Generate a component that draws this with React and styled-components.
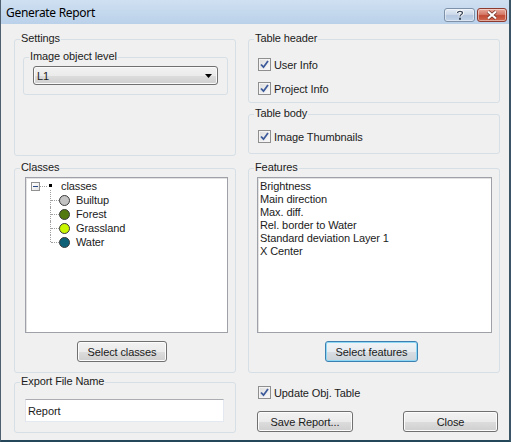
import React from 'react';
import styled, { createGlobalStyle } from 'styled-components';

const GlobalStyle = createGlobalStyle`
  html, body {
    margin: 0;
    padding: 0;
    background: #f0f0f0;
  }
  body {
    font-family: 'Liberation Sans', Arial, sans-serif;
    font-size: 11px;
    letter-spacing: -0.1px;
    color: #1b1b1b;
  }
  * {
    box-sizing: border-box;
  }
`;

const features = [
  'Brightness',
  'Main direction',
  'Max. diff.',
  'Rel. border to Water',
  'Standard deviation Layer 1',
  'X Center',
];

const classes = [
  { name: 'Builtup', color: '#c3c3c3' },
  { name: 'Forest', color: '#537a10' },
  { name: 'Grassland', color: '#c8f700' },
  { name: 'Water', color: '#0f6178' },
];

const Window = styled.div`
  width: 511px;
  height: 442px;
  display: flex;
  flex-direction: column;
  background: #f0f0f0;
  border-left: 1px solid #4f6070;
  border-right: 2px solid #3b5566;
  border-bottom: 2px solid #24485a;
`;

const TitleBar = styled.div`
  height: 24px;
  flex: none;
  display: flex;
  justify-content: space-between;
  background: linear-gradient(to bottom, #cfe0f1, #bad1ea);
  padding-left: 5px;
`;

const Title = styled.div`
  font-family: 'Noto Sans', 'Open Sans', sans-serif;
  font-size: 12px;
  letter-spacing: -0.3px;
  line-height: 24px;
  padding-top: 1px;
  color: #000;
`;

const CaptionButtons = styled.div`
  display: flex;
  gap: 2px;
  margin-top: 8px;
  margin-right: 2px;
  height: 14px;
`;

const CaptionButton = styled.div`
  width: ${(p) => p.$w}px;
  height: 14px;
  border-radius: 3px;
  display: flex;
  align-items: center;
  justify-content: center;
  border: 1px solid ${(p) => (p.$close ? '#8d3a2f' : '#7d91a9')};
  background: ${(p) =>
    p.$close
      ? 'linear-gradient(to bottom, #e9a99b 0%, #d47a68 45%, #c24a35 55%, #cf6a52 100%)'
      : 'linear-gradient(to bottom, #e3ecf6 0%, #cdd9ea 45%, #b5c7df 55%, #c3d5ea 100%)'};
  box-shadow: inset 0 0 0 1px rgba(255, 255, 255, 0.45);
`;

const Body = styled.div`
  display: grid;
  grid-template-columns: 222px 252px;
  column-gap: 12px;
  padding-left: 13px;
  align-items: start;
`;

const Column = styled.div`
  display: flex;
  flex-direction: column;
`;

const Group = styled.div`
  position: relative;
  height: ${(p) => p.$h}px;
  margin-top: ${(p) => p.$mt}px;
  border: 1px solid #d5dfe5;
  border-radius: 3px;
  padding: ${(p) => p.$pad || '0'};
`;

const Legend = styled.span`
  position: absolute;
  top: -8px;
  left: 5px;
  padding: 0 1px;
  background: #f0f0f0;
  line-height: 13px;
  white-space: nowrap;
`;

const ComboBox = styled.div`
  height: 19px;
  margin: 8px 9px 0 9px;
  border: 1px solid #707070;
  border-radius: 3px;
  background: linear-gradient(to bottom, #f2f2f2 0%, #ebebeb 50%, #dddddd 51%, #cfcfcf 100%);
  box-shadow: inset 0 0 0 1px #fafafa;
  display: flex;
  align-items: center;
  justify-content: space-between;
  padding: 0 5px 0 3px;
`;

const ListBox = styled.div`
  height: 156px;
  margin: ${(p) => p.$m};
  background: #fff;
  border: 1px solid #9ea2a8;
  box-shadow: inset 1px 1px 0 #e2e2e2;
  padding: ${(p) => p.$pad};
`;

const FeatureItem = styled.div`
  line-height: 13px;
  white-space: nowrap;
`;

const Button = styled.div`
  width: ${(p) => p.$w}px;
  height: 21px;
  margin-left: ${(p) => p.$ml || 0}px;
  margin-top: ${(p) => p.$mt || 0}px;
  border: 1px solid ${(p) => (p.$focus ? '#3c7fb1' : '#707070')};
  border-radius: 3px;
  background: ${(p) =>
    p.$focus
      ? 'linear-gradient(to bottom, #f0f4f7 0%, #e7ecf0 50%, #d7dde2 51%, #ccd3d8 100%)'
      : 'linear-gradient(to bottom, #f2f2f2 0%, #ebebeb 50%, #dddddd 51%, #cfcfcf 100%)'};
  box-shadow: inset 0 0 0 1px ${(p) => (p.$focus ? '#8fd8f5' : '#fcfcfc')};
  display: flex;
  align-items: center;
  justify-content: center;
  white-space: nowrap;
`;

const TextInput = styled.div`
  height: 23px;
  margin: 16px 11px 0 10px;
  background: #fff;
  border: 1px solid;
  border-color: #abadb3 #e3e9ef #e3e9ef #e2e3ea;
  padding-left: 2px;
  display: flex;
  align-items: center;
`;

const CheckRow = styled.div`
  display: flex;
  align-items: center;
  height: 13px;
  margin-left: ${(p) => p.$ml ?? 9}px;
  margin-top: ${(p) => p.$mt || 0}px;
`;

const CheckBox = styled.span`
  width: 13px;
  height: 13px;
  flex: none;
  border: 1px solid #8f8f8f;
  background: linear-gradient(135deg, #dcdcdc, #fbfbfb);
  box-shadow: inset 0 0 0 1px #f4f4f4;
  display: flex;
  align-items: center;
  justify-content: center;
  margin-right: 3px;
`;

const TreeRow = styled.div`
  display: flex;
  align-items: center;
  height: 14px;
  padding-left: ${(p) => p.$indent}px;
`;

const ExpandBox = styled.span`
  width: 9px;
  height: 9px;
  flex: none;
  border: 1px solid #919191;
  background: linear-gradient(135deg, #ffffff, #e4e4e4);
  display: flex;
  align-items: center;
  justify-content: center;
  &::after {
    content: '';
    width: 5px;
    height: 1px;
    background: #2c4a86;
  }
`;

const HDots = styled.span`
  width: ${(p) => p.$w}px;
  flex: none;
  border-top: 1px dotted #a0a0a0;
`;

const Bullet = styled.span`
  width: 3px;
  height: 3px;
  flex: none;
  background: #000;
  margin-left: 2px;
  margin-right: 9px;
  margin-top: -1px;
`;

const Connector = styled.span`
  position: relative;
  width: 9px;
  height: 14px;
  flex: none;
  &::before {
    content: '';
    position: absolute;
    left: 0;
    top: ${(p) => (p.$first ? -3 : 0)}px;
    height: ${(p) => (p.$last ? 7 : 14) + (p.$first ? 3 : 0)}px;
    border-left: 1px dotted #a0a0a0;
  }
  &::after {
    content: '';
    position: absolute;
    left: 1px;
    top: 7px;
    width: 8px;
    border-top: 1px dotted #a0a0a0;
  }
`;

const ClassDot = styled.span`
  width: 11px;
  height: 11px;
  flex: none;
  border-radius: 50%;
  background: ${(p) => p.$color};
  border: 1px solid #3a3a3a;
  margin-right: 6px;
`;

const Footer = styled.div`
  display: flex;
  justify-content: space-between;
  padding: 0 2px 0 9px;
  margin-top: 12px;
`;

const Check = () => (
  <CheckBox>
    <svg width="9" height="9" viewBox="0 0 9 9">
      <path d="M1 4.5 L3.5 7.2 L8 1" fill="none" stroke="#3c5a9a" strokeWidth="1.8" />
    </svg>
  </CheckBox>
);

const App = () => (
  <>
    <GlobalStyle />
    <Window>
      <TitleBar>
        <Title>Generate Report</Title>
        <CaptionButtons>
          <CaptionButton $w={31}>
            <svg width="8" height="10" viewBox="0 0 8 10">
              <path
                d="M1.5 3 C1.5 0.8 6.5 0.8 6.5 3 C6.5 4.6 4 4.6 4 6.5"
                fill="none"
                stroke="#fff"
                strokeWidth="3"
              />
              <path
                d="M1.5 3 C1.5 0.8 6.5 0.8 6.5 3 C6.5 4.6 4 4.6 4 6.5"
                fill="none"
                stroke="#3e4a5c"
                strokeWidth="1.3"
              />
              <rect x="3" y="7.8" width="2" height="2" fill="#3e4a5c" />
            </svg>
          </CaptionButton>
          <CaptionButton $w={30} $close>
            <svg width="12" height="10" viewBox="0 0 12 10">
              <path d="M2 1.5 L10 8.5 M10 1.5 L2 8.5" stroke="#6b2a20" strokeWidth="3.6" />
              <path d="M2 1.5 L10 8.5 M10 1.5 L2 8.5" stroke="#fff" strokeWidth="2.2" />
            </svg>
          </CaptionButton>
        </CaptionButtons>
      </TitleBar>

      <Body>
        <Column>
          <Group $h={117} $mt={15} $pad="17px 7px 0 8px">
            <Legend>Settings</Legend>
            <Group $h={38} $mt={0}>
              <Legend>Image object level</Legend>
              <ComboBox>
                <span>L1</span>
                <svg width="7" height="4" viewBox="0 0 7 4">
                  <path d="M0 0 H7 L3.5 4 Z" fill="#000" />
                </svg>
              </ComboBox>
            </Group>
          </Group>

          <Group $h={205} $mt={12}>
            <Legend>Classes</Legend>
            <ListBox $m="8px 7px 0 10px" $pad="1px 0 0 0">
              <TreeRow $indent={5}>
                <ExpandBox />
                <HDots $w={7} />
                <Bullet />
                <span>classes</span>
              </TreeRow>
              {classes.map((c, i) => (
                <TreeRow key={c.name} $indent={24}>
                  <Connector $first={i === 0} $last={i === classes.length - 1} />
                  <ClassDot $color={c.color} />
                  <span>{c.name}</span>
                </TreeRow>
              ))}
            </ListBox>
            <Button $w={90} $ml={62} $mt={8}>
              Select classes
            </Button>
          </Group>

          <Group $h={51} $mt={9}>
            <Legend>Export File Name</Legend>
            <TextInput>Report</TextInput>
          </Group>
        </Column>

        <Column>
          <Group $h={64} $mt={15} $pad="18px 0 0 0">
            <Legend>Table header</Legend>
            <CheckRow>
              <Check />
              User Info
            </CheckRow>
            <CheckRow $mt={11}>
              <Check />
              Project Info
            </CheckRow>
          </Group>

          <Group $h={40} $mt={11} $pad="15px 0 0 0">
            <Legend>Table body</Legend>
            <CheckRow>
              <Check />
              Image Thumbnails
            </CheckRow>
          </Group>

          <Group $h={205} $mt={14}>
            <Legend>Features</Legend>
            <ListBox $m="8px 7px 0 8px" $pad="2px 0 0 2px">
              {features.map((f) => (
                <FeatureItem key={f}>{f}</FeatureItem>
              ))}
            </ListBox>
            <Button $w={93} $ml={76} $mt={8} $focus>
              Select features
            </Button>
          </Group>

          <CheckRow $ml={10} $mt={13}>
            <Check />
            Update Obj. Table
          </CheckRow>

          <Footer>
            <Button $w={96}>Save Report...</Button>
            <Button $w={95}>Close</Button>
          </Footer>
        </Column>
      </Body>
    </Window>
  </>
);

export default App;
